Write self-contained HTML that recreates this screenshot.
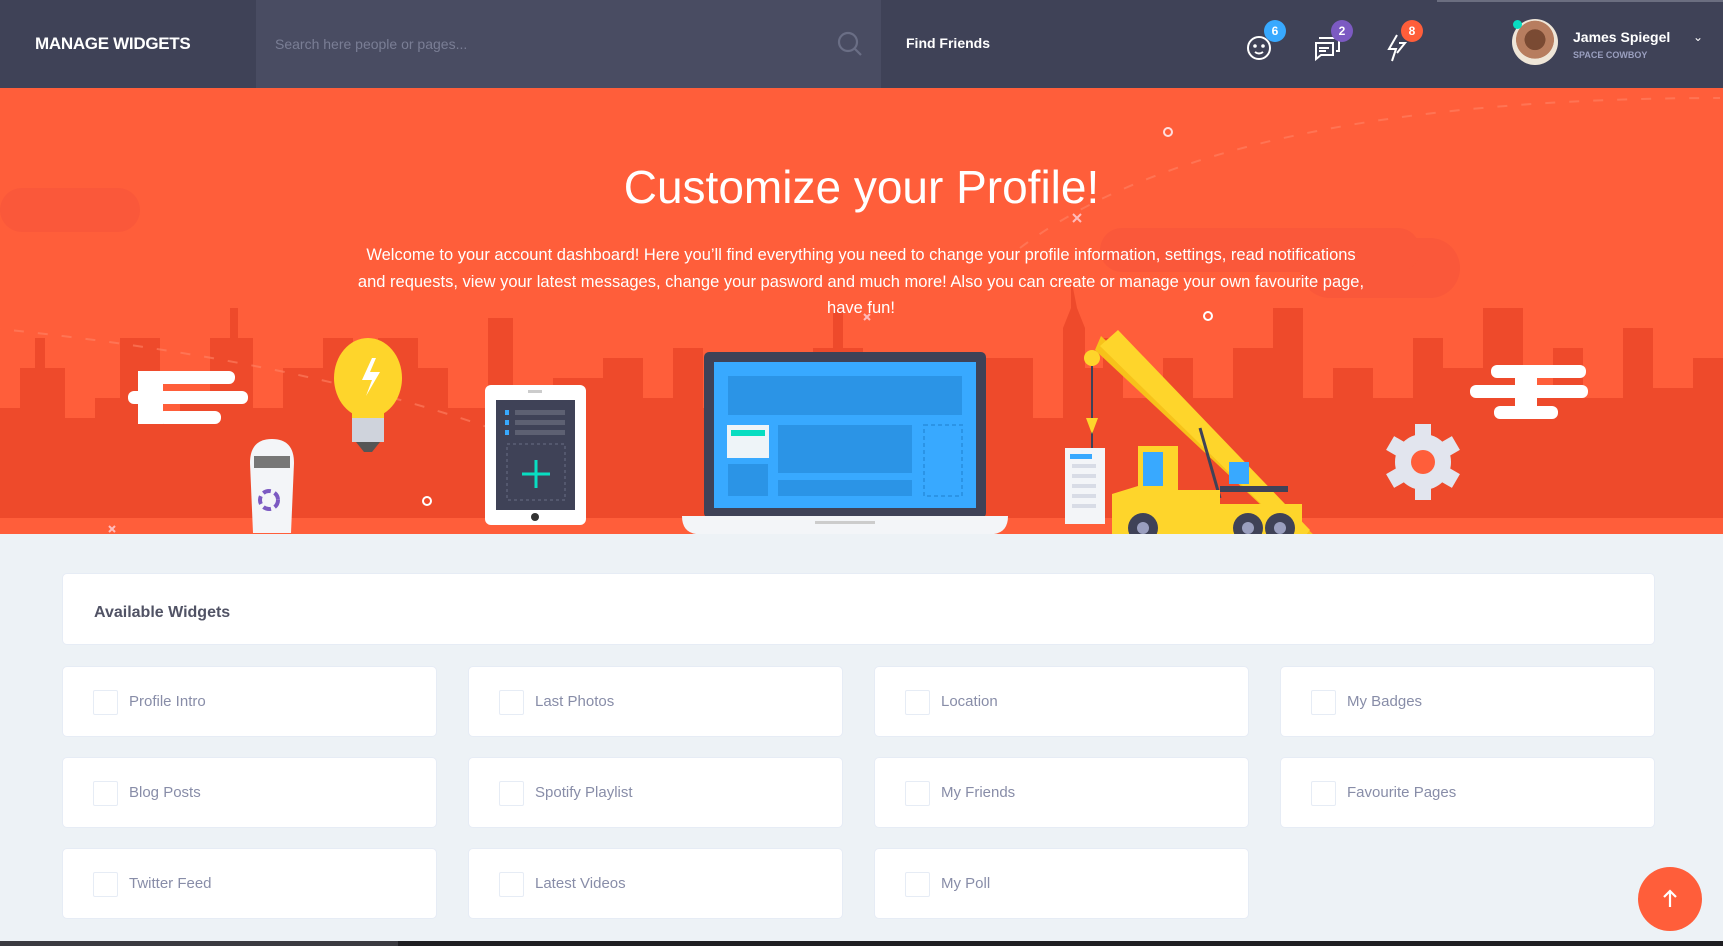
<!DOCTYPE html>
<html><head><meta charset="utf-8"><style>
*{margin:0;padding:0;box-sizing:border-box}
body{width:1723px;height:946px;overflow:hidden;background:#edf2f6;font-family:"Liberation Sans",sans-serif;position:relative}
.hdr{position:absolute;left:0;top:0;width:1723px;height:88px;background:#3f4257}
.logo{position:absolute;left:35px;top:34px;color:#fff;font-weight:bold;font-size:17px;letter-spacing:-0.3px}
.search{position:absolute;left:256px;top:0;width:625px;height:88px;background:#494c62}
.search span{position:absolute;left:19px;top:36px;color:#7a7e95;font-size:14px}
.ff{position:absolute;left:906px;top:35px;color:#fff;font-weight:bold;font-size:14px}
.badge{position:absolute;width:22px;height:22px;border-radius:50%;color:#fff;font-size:12px;font-weight:bold;text-align:center;line-height:22px}
.hero{position:absolute;left:0;top:88px;width:1723px;height:446px;background:#ff5e3a;overflow:hidden}
h1{position:absolute;left:0;width:1723px;top:72px;text-align:center;color:#fff;font-weight:normal;font-size:46px}
.hero p{position:absolute;left:356px;width:1010px;top:154px;text-align:center;color:#fff;font-size:16.5px;line-height:26.5px}
.card{position:absolute;background:#fff;border:1px solid #e6ecf5;border-radius:5px}
.w .cb{position:absolute;left:30px;top:23px;width:25px;height:25px;border:1px solid #e6ecf5;border-radius:2px}
.w span{position:absolute;left:66px;top:26px;color:#888da8;font-size:15px}
</style></head><body>
<div class="hdr">
 <div class="logo">MANAGE WIDGETS</div>
 <div class="search"><span>Search here people or pages...</span>
  <svg style="position:absolute;left:580px;top:30px" width="30" height="30" viewBox="0 0 30 30" fill="none" stroke="#6a6e85" stroke-width="2.2"><circle cx="12" cy="12" r="9"/><path d="M19 19l6 6"/></svg></div>
 <div class="ff">Find Friends</div>
 <svg style="position:absolute;left:1246px;top:34px" width="28" height="28" viewBox="0 0 28 28" fill="none" stroke="#fff" stroke-width="2"><circle cx="13" cy="14" r="11"/><path d="M9 18q4 3 8 0"/><circle cx="9" cy="12" r="0.8" fill="#fff"/><circle cx="17" cy="12" r="0.8" fill="#fff"/></svg>
 <div class="badge" style="left:1264px;top:20px;background:#38a9ff">6</div>
 <svg style="position:absolute;left:1313px;top:34px" width="30" height="28" viewBox="0 0 30 28" fill="none" stroke="#fff" stroke-width="2"><path d="M2 9h18v12H8l-5 4V9z"/><path d="M6 4h20v13h-3"/><path d="M6 14h10M6 17h7"/></svg>
 <div class="badge" style="left:1331px;top:20px;background:#7c5ac2">2</div>
 <svg style="position:absolute;left:1385px;top:33px" width="24" height="30" viewBox="0 0 24 30" fill="none" stroke="#fff" stroke-width="2"><path d="M12 2L4 16h7l-4 12M14 10h6l-8 10"/></svg>
 <div class="badge" style="left:1401px;top:20px;background:#ff5e3a">8</div>
 <div style="position:absolute;left:1512px;top:19px;width:46px;height:46px;border-radius:50%;background:radial-gradient(circle at 50% 45%,#7a4a33 0 30%,#b77d5f 31% 55%,#efe6d8 56%)"></div>
 <div style="position:absolute;left:1513px;top:20px;width:9px;height:9px;border-radius:50%;background:#08ddc1"></div>
 <div style="position:absolute;left:1573px;top:29px;color:#fff;font-weight:bold;font-size:14px">James Spiegel</div>
 <div style="position:absolute;left:1573px;top:50px;color:#9a9fbf;font-size:9px;font-weight:bold">SPACE COWBOY</div>
 <div style="position:absolute;left:1693px;top:30px;color:#fff;font-size:12px">⌄</div>
 <div style="position:absolute;left:1437px;top:0;width:286px;height:2px;background:#6b6e80"></div>
</div>
<div class="hero">
 <svg style="position:absolute;left:0;top:0" width="1723" height="446" viewBox="0 0 1723 446">
  <g fill="#f7553a" opacity="0.6">
   <rect x="0" y="100" width="140" height="44" rx="22"/><rect x="1300" y="150" width="160" height="60" rx="30"/><rect x="1100" y="140" width="320" height="44" rx="22"/>
  </g>
  <g fill="#ee4a2b">
   <path d="M0 320h20v-40h15v-30h10v30h20v50h30v-20h25v-60h40v80h20v-20h30v-60h20v-30h8v30h15v70h30v-40h40v-30h30v60h25v-60h40v30h30v40h40v-90h25v100h40v-40h50v-20h40v40h30v-50h30v60h40v-30h30v30h40v-60h20v-40h10v40h20v70h40v-30h40v30h40v-60h50v60h30v-50h40v-30h20v60h40v-40h30v40h40v-50h40v-40h30v90h30v-30h40v30h40v-60h30v30h40v-60h40v90h30v-50h30v50h40v-70h30v60h40v-30h30v160H0z"/>
   <path d="M1063 330v-90l8-20v-30l6 30 8 20v90z"/>
  </g>
  <g fill="none" stroke="#ff8466" stroke-width="2" stroke-dasharray="10 14" opacity="0.6"><path d="M-10 240q300 30 500 100"/><path d="M1020 160q200-150 700-150"/></g>
  <g fill="#fff">
   <rect x="138" y="283" width="97" height="13" rx="6"/><rect x="128" y="303" width="120" height="13" rx="6"/><rect x="158" y="323" width="63" height="13" rx="6"/><rect x="138" y="283" width="25" height="53"/>
   <rect x="1491" y="277" width="95" height="13" rx="6"/><rect x="1470" y="297" width="118" height="13" rx="6"/><rect x="1494" y="318" width="64" height="13" rx="6"/><rect x="1515" y="277" width="22" height="53"/>
  </g>
  <circle cx="1168" cy="44" r="4" fill="none" stroke="#fdd" stroke-width="2"/><circle cx="1208" cy="228" r="4" fill="none" stroke="#fff" stroke-width="2"/><circle cx="427" cy="413" r="4" fill="none" stroke="#fff" stroke-width="2"/>
  <g stroke="#fbb" stroke-width="2"><path d="M1073 126l8 8M1081 126l-8 8M864 226l6 6M870 226l-6 6M109 438l6 6M115 438l-6 6"/></g>
  <ellipse cx="368" cy="290" rx="34" ry="40" fill="#fed52b"/><rect x="352" y="310" width="32" height="20" fill="#fed52b"/>
  <path d="M372 270l-10 22h10l-6 16 14-24h-10l6-14z" fill="#fff"/>
  <rect x="352" y="330" width="32" height="24" fill="#cfd3dc"/><path d="M356 354h24l-8 10h-8z" fill="#555"/>
  <path d="M250 375q0-24 22-24t22 24l-3 70h-38z" fill="#f3f5f8"/><rect x="254" y="368" width="36" height="12" fill="#777"/>
  <circle cx="269" cy="412" r="9" fill="none" stroke="#7c5ac2" stroke-width="4" stroke-dasharray="8 4"/>
  <rect x="485" y="297" width="101" height="140" rx="6" fill="#fff"/><rect x="496" y="312" width="79" height="110" fill="#3f4257"/>
  <circle cx="535" cy="429" r="4" fill="#333"/><rect x="528" y="302" width="14" height="3" fill="#ccc"/>
  <g fill="#5d6072"><rect x="515" y="322" width="50" height="5"/><rect x="515" y="332" width="50" height="5"/><rect x="515" y="342" width="50" height="5"/></g>
  <g fill="#38a9ff"><rect x="505" y="322" width="4" height="5"/><rect x="505" y="332" width="4" height="5"/><rect x="505" y="342" width="4" height="5"/></g>
  <rect x="507" y="356" width="58" height="56" fill="none" stroke="#6a6e85" stroke-dasharray="3 3"/>
  <path d="M536 372v28M522 386h28" stroke="#08ddc1" stroke-width="3"/>
  <rect x="704" y="264" width="282" height="166" rx="5" fill="#3f4257"/><rect x="714" y="274" width="262" height="146" fill="#38a9ff"/>
  <g fill="#2b94e6"><rect x="728" y="288" width="234" height="39"/><rect x="778" y="337" width="134" height="48"/><rect x="778" y="392" width="134" height="16"/><rect x="728" y="376" width="40" height="32"/></g>
  <rect x="924" y="337" width="38" height="71" fill="none" stroke="#2b94e6" stroke-width="2" stroke-dasharray="4 3"/>
  <rect x="727" y="337" width="42" height="33" fill="#eef4f8"/><rect x="731" y="342" width="34" height="6" fill="#08ddc1"/>
  <path d="M682 428h326q0 16-14 18H696q-14-2-14-18z" fill="#f3f5f8"/><rect x="815" y="433" width="60" height="3" fill="#ccc"/>
  <path d="M1095 262l6-14 214 200-8 12z" fill="#f7c21a"/><path d="M1100 258l18-16 192 200-10 12z" fill="#fed52b"/>
  <circle cx="1092" cy="270" r="8" fill="#fed52b"/><path d="M1092 278v105" stroke="#3f4257" stroke-width="2"/>
  <path d="M1086 330h12l-6 16z" fill="#fed52b"/><path d="M1200 340l20 70" stroke="#3f4257" stroke-width="3"/>
  <rect x="1065" y="360" width="40" height="76" fill="#f3f5f8"/><rect x="1070" y="366" width="22" height="5" fill="#38a9ff"/>
  <g fill="#d8dce6"><rect x="1072" y="376" width="24" height="4"/><rect x="1072" y="386" width="24" height="4"/><rect x="1072" y="396" width="24" height="4"/><rect x="1072" y="406" width="24" height="4"/><rect x="1072" y="416" width="24" height="4"/></g>
  <path d="M1138 358h40v44h42v14h82v30h-190v-40l26-8z" fill="#fed52b"/>
  <rect x="1143" y="364" width="20" height="34" fill="#38a9ff"/><rect x="1229" y="374" width="20" height="22" fill="#38a9ff"/>
  <rect x="1220" y="398" width="68" height="6" fill="#3f4257"/>
  <g fill="#3f4257"><circle cx="1143" cy="440" r="15"/><circle cx="1248" cy="440" r="15"/><circle cx="1280" cy="440" r="15"/></g>
  <g fill="#9a9fbf"><circle cx="1143" cy="440" r="6"/><circle cx="1248" cy="440" r="6"/><circle cx="1280" cy="440" r="6"/></g>
  <g transform="translate(1423 374)"><circle r="28" fill="#e2e5ee"/><g fill="#e2e5ee"><rect x="-8" y="-38" width="16" height="76"/><rect x="-8" y="-38" width="16" height="76" transform="rotate(60)"/><rect x="-8" y="-38" width="16" height="76" transform="rotate(120)"/></g><circle r="12" fill="#ff5e3a"/></g>
 </svg>
 <h1>Customize your Profile!</h1>
 <p>Welcome to your account dashboard! Here you’ll find everything you need to change your profile information, settings, read notifications and requests, view your latest messages, change your pasword and much more! Also you can create or manage your own favourite page, have fun!</p>
</div>
<div class="card" style="left:62px;top:573px;width:1593px;height:72px"><div style="position:absolute;left:31px;top:30px;color:#515365;font-weight:bold;font-size:16px">Available Widgets</div></div>
<div class="card w" style="left:62px;top:666px;width:375px;height:71px"><div class="cb"></div><span>Profile Intro</span></div>
<div class="card w" style="left:468px;top:666px;width:375px;height:71px"><div class="cb"></div><span>Last Photos</span></div>
<div class="card w" style="left:874px;top:666px;width:375px;height:71px"><div class="cb"></div><span>Location</span></div>
<div class="card w" style="left:1280px;top:666px;width:375px;height:71px"><div class="cb"></div><span>My Badges</span></div>
<div class="card w" style="left:62px;top:757px;width:375px;height:71px"><div class="cb"></div><span>Blog Posts</span></div>
<div class="card w" style="left:468px;top:757px;width:375px;height:71px"><div class="cb"></div><span>Spotify Playlist</span></div>
<div class="card w" style="left:874px;top:757px;width:375px;height:71px"><div class="cb"></div><span>My Friends</span></div>
<div class="card w" style="left:1280px;top:757px;width:375px;height:71px"><div class="cb"></div><span>Favourite Pages</span></div>
<div class="card w" style="left:62px;top:848px;width:375px;height:71px"><div class="cb"></div><span>Twitter Feed</span></div>
<div class="card w" style="left:468px;top:848px;width:375px;height:71px"><div class="cb"></div><span>Latest Videos</span></div>
<div class="card w" style="left:874px;top:848px;width:375px;height:71px"><div class="cb"></div><span>My Poll</span></div>
<div style="position:absolute;left:1638px;top:867px;width:64px;height:64px;border-radius:50%;background:#ff5e3a"></div>
<svg style="position:absolute;left:1658px;top:887px" width="24" height="24" viewBox="0 0 24 24" fill="none" stroke="#fff" stroke-width="2.2"><path d="M12 20V4M6 10l6-6 6 6"/></svg>
<div style="position:absolute;left:0;top:941px;width:1723px;height:5px;background:#1e1e22"></div>
<div style="position:absolute;left:0;top:941px;width:398px;height:5px;background:#3a3a40"></div>
</body></html>
